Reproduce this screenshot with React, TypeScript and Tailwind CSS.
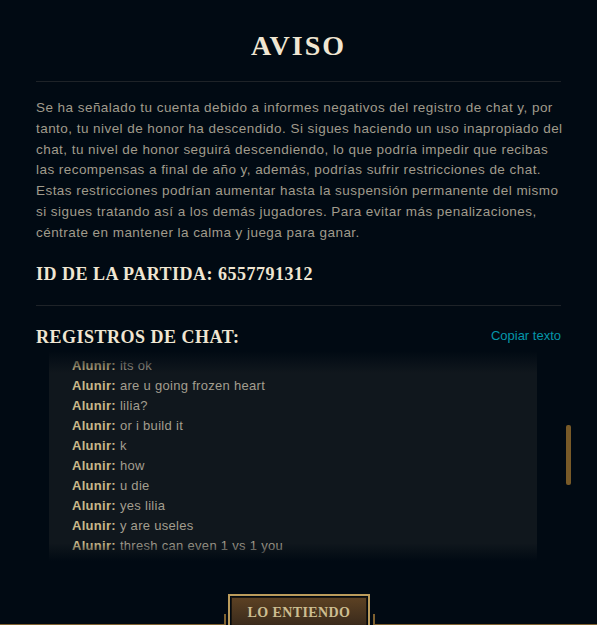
import React from 'react';

const LOG = [
  'its ok',
  'are u going frozen heart',
  'lilia?',
  'or i build it',
  'k',
  'how',
  'u die',
  'yes lilia',
  'y are useles',
  'thresh can even 1 vs 1 you',
];

// the notice wraps at the same words as the client does
const NOTICE = [
  'Se ha señalado tu cuenta debido a informes negativos del registro de chat y, por',
  'tanto, tu nivel de honor ha descendido. Si sigues haciendo un uso inapropiado del',
  'chat, tu nivel de honor seguirá descendiendo, lo que podría impedir que recibas',
  'las recompensas a final de año y, además, podrías sufrir restricciones de chat.',
  'Estas restricciones podrían aumentar hasta la suspensión permanente del mismo',
  'si sigues tratando así a los demás jugadores. Para evitar más penalizaciones,',
  'céntrate en mantener la calma y juega para ganar.',
];

const HEADING =
  "font-['Liberation_Serif',serif] font-bold uppercase text-[#f0e6d2] text-[18px] leading-[24px] tracking-[0.5px]";

export default function App() {
  return (
    <div className="min-h-screen overflow-hidden bg-[#010a13] font-['Liberation_Sans',Arial,sans-serif]">
      <div className="px-[36px]">
        <h1 className="pt-[30px] text-center font-['Liberation_Serif',serif] text-[28px] font-bold leading-[32px] tracking-[2px] text-[#f0e6d2]">
          AVISO
        </h1>
        <div className="mt-[19px] h-px bg-[#1e2328]" />

        <p className="mt-[16px] text-[13.5px] leading-[20.8px] tracking-[0.45px] whitespace-nowrap text-[#a09b8c]">
          {NOTICE.map((line, i) => (
            <span key={i} className="block">
              {line}
            </span>
          ))}
        </p>

        <h2 className={`mt-[18px] ${HEADING}`}>ID de la partida: 6557791312</h2>
        <div className="mt-[19px] h-px bg-[#1e2328]" />

        <div className="mt-[19px] flex items-center justify-between">
          <h2 className={HEADING}>Registros de chat:</h2>
          <button type="button" className="mt-[-2px] text-[13px] text-[#0596aa] hover:text-[#0ac8b9]">
            Copiar texto
          </button>
        </div>
      </div>

      {/* chat log + gold scroll thumb */}
      <div className="mt-[2px] flex">
        <div className="relative ml-[49px] h-[210px] w-[488px] overflow-hidden bg-[#10171d] pt-[5px] pl-[23px]">
          {LOG.map((line, i) => (
            <div key={i} className="text-[13px] leading-[20px] tracking-[0.3px] text-[#a39e8f]">
              <span className="font-bold text-[#c8b88a]">Alunir:</span> {line}
            </div>
          ))}
          <div className="pointer-events-none absolute inset-x-0 top-0 h-[22px] bg-gradient-to-b from-[#010a13] to-transparent" />
          <div className="pointer-events-none absolute inset-x-0 bottom-0 h-[18px] bg-gradient-to-t from-[#010a13] to-transparent" />
        </div>
        <div className="ml-[29px] mt-[74px] h-[60px] w-[5px] rounded-[2px] bg-[#785a28]" />
      </div>

      {/* footer frame with button */}
      <div className="mt-[33px] flex items-start">
        <div className="mt-[20px] h-[12px] w-[226px] border-r-2 border-b-2 border-[#7f6130]" />
        <button type="button" className="ml-[2px] h-[40px] w-[142px] border-2 border-[#bb9c5c] p-px">
          <span className="flex h-full w-full items-start justify-center border border-[#1c160e] bg-gradient-to-b from-[#5c4123] to-[#35271a] pt-[5px] font-['Liberation_Serif',serif] text-[14px] font-bold leading-[20px] tracking-[0.4px] text-[#cdbe91]">
            LO ENTIENDO
          </span>
        </button>
        <div className="mt-[20px] ml-[3px] h-[12px] flex-1 border-l-2 border-b-2 border-[#7f6130]" />
      </div>
    </div>
  );
}
